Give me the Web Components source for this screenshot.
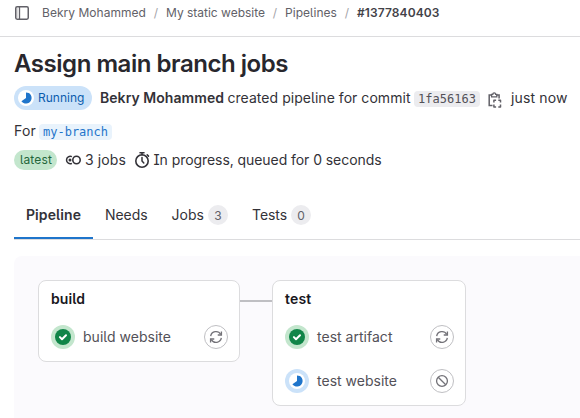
<!DOCTYPE html>
<html lang="en">
<head>
<meta charset="utf-8">
<title>Pipeline #1377840403</title>
<style>
html,body{margin:0;padding:0;background:#fff;overflow:hidden}
body{width:580px;height:418px;font-family:Inter,"Noto Sans",sans-serif;font-feature-settings:"cv05" 1,"cv08" 1;color:#333238}
</style>
</head>
<body>
<pipeline-page></pipeline-page>
<script>
const define = (name, html, extra) => customElements.define(name, class extends HTMLElement {
  connectedCallback() {
    if (!this.shadowRoot) {
      this.attachShadow({mode: 'open'}).innerHTML = html(this);
    }
    if (extra) extra(this);
  }
});

// Text run whose tracking is tuned to a given advance width.
define('ui-text', () => `<style>:host{display:block;white-space:pre;flex:none;line-height:20px}span{display:inline-block}</style><span><slot></slot></span>`, el => {
  const want = parseFloat(el.getAttribute('w'));
  if (!want) return;
  const span = el.shadowRoot.querySelector('span');
  const natural = span.getBoundingClientRect().width;
  span.style.letterSpacing = ((want - natural) / el.textContent.length) + 'px';
  el.style.width = want + 'px';
});

const icons = {
  sidebar: `<rect x="1.75" y="1.75" width="12.5" height="12.5" rx="1.4" fill="none" stroke="currentColor" stroke-width="1.5"/><path d="M5.5 2v12" stroke="currentColor" stroke-width="1.3"/><path d="M3.2 3v10" stroke="currentColor" stroke-opacity=".3" stroke-width="1"/>`,
  copy: `<path d="M5 3H2.2v10.5H5.5M9.5 3h2.6v3.4" fill="none" stroke="currentColor" stroke-width="1.5"/><path d="M4.6 4.8V2.3h1.2a1.4 1.4 0 0 1 2.8 0h1.2v2.5z" fill="none" stroke="currentColor" stroke-width="1.3"/><path d="M6.9 10.6V8.2h2.2M11.3 8.2h2.2v2.4M13.5 12.6V15h-2.2M9.1 15H6.9v-2.4" fill="none" stroke="currentColor" stroke-width="1.5" stroke-linejoin="round"/>`,
  jobs: `<path d="M6.9 4.7A3.7 3.7 0 1 0 6.9 11.3" fill="none" stroke="currentColor" stroke-width="1.5"/><circle cx="11.5" cy="8" r="3.7" fill="none" stroke="currentColor" stroke-width="1.6"/><circle cx="5" cy="8" r="1.5" fill="currentColor"/>`,
  timer: `<circle cx="8" cy="9" r="6.2" fill="none" stroke="currentColor" stroke-width="1.6"/><path d="M6 .8h4M8 .8v2.2M13.2 2.8l1.3 1.3M8 5.6V9l1.8 2" fill="none" stroke="currentColor" stroke-width="1.5" stroke-linecap="round"/>`,
  retry: `<path d="M1.9 7A6.2 6.2 0 0 1 13.4 5M14.1 9A6.2 6.2 0 0 1 2.6 11" fill="none" stroke="currentColor" stroke-width="1.5"/><path d="M14.2 1.6v4.1h-4.2M1.8 14.4v-4.1H6" fill="none" stroke="currentColor" stroke-width="1.5"/>`,
  cancel: `<circle cx="8" cy="8" r="6.2" fill="none" stroke="currentColor" stroke-width="1.5"/><path d="M3.7 3.7l8.6 8.6" stroke="currentColor" stroke-width="1.5"/>`,
  running: `<circle cx="8" cy="8" r="8" fill="#fff"/><path d="M8 2.4A5.6 5.6 0 1 1 3.4 11.2L8 8z" fill="#1f75cb"/>`,
  success: `<circle cx="8" cy="8" r="8" fill="#108548"/><path d="M4.9 8.1l2.1 2.1 4-4" fill="none" stroke="#fff" stroke-width="2" stroke-linecap="round" stroke-linejoin="round"/>`
};
define('ui-icon', el => `<style>:host{display:block;flex:none;width:${el.getAttribute('size') || 16}px;height:${el.getAttribute('size') || 16}px}svg{display:block;width:100%;height:100%}</style><svg viewBox="0 0 16 16">${icons[el.getAttribute('name')]}</svg>`);

define('status-dot', el => `<style>:host{display:flex;flex:none;align-items:center;justify-content:center;width:24px;height:24px;border-radius:50%;background:${el.getAttribute('kind') === 'success' ? '#c3e6cd' : '#cbe2f9'}}</style><ui-icon name="${el.getAttribute('kind')}"></ui-icon>`);

define('round-button', el => `<style>:host{display:flex;flex:none;box-sizing:border-box;align-items:center;justify-content:center;width:24px;height:24px;border:1px solid #bfbfc3;border-radius:50%;color:#737278;background:#fff}</style><ui-icon name="${el.getAttribute('icon')}" size="14"></ui-icon>`);

define('job-row', el => `<style>:host{display:flex;height:24px;align-items:center;margin-bottom:20px;color:#535158;font-size:14px}:host(:last-child){margin-bottom:0}ui-text{margin-left:8px}round-button{margin-left:auto}</style>
<status-dot kind="${el.getAttribute('kind')}"></status-dot><ui-text w="${el.getAttribute('w')}">${el.getAttribute('label')}</ui-text><round-button icon="${el.getAttribute('icon')}"></round-button>`);

define('stage-card', el => `<style>:host{display:block;flex:none;box-sizing:border-box;padding:8px 11px 12px 12px;border:1px solid #dcdcde;border-radius:8px;background:#fff}.t{height:20px;margin-bottom:16px;color:#18171d;font-size:14px;font-weight:600}</style><div class="t"><ui-text w="${el.getAttribute('w')}">${el.getAttribute('label')}</ui-text></div><slot></slot>`);

define('code-chip', () => `<style>:host{display:flex;flex:none;box-sizing:border-box;height:16px;padding:0 4px;align-items:center;border-radius:4px;background:#ececef;color:#535158;font:12px "DejaVu Sans Mono",monospace;font-feature-settings:normal}:host([link]){background:#e9f3fc;color:#1f75cb}</style><slot></slot>`);

define('nav-tab', el => `<style>:host{display:flex;flex:none;box-sizing:border-box;height:48px;padding:0 12px;align-items:center;font-size:14px}:host([active]){font-weight:600;box-shadow:inset 0 -2px #1f75cb}.c{display:flex;width:20px;height:20px;margin-left:4px;align-items:center;justify-content:center;border-radius:10px;background:#ececef;color:#626168;font-size:12px}</style><ui-text w="${el.getAttribute('w')}">${el.getAttribute('label')}</ui-text>${el.hasAttribute('count') ? `<div class="c">${el.getAttribute('count')}</div>` : ''}`);

define('top-crumbs', () => `<style>:host{display:flex;box-sizing:border-box;height:37px;padding:0 0 11px 14px;align-items:center;border-bottom:1px solid #dcdcde;font-size:12px;color:#626168}i{font-style:normal;width:20px;text-align:center;color:#a4a3a8}ui-icon{margin-right:12px}b{font-weight:600;color:#434248}</style>
<ui-icon name="sidebar"></ui-icon><ui-text w="104">Bekry Mohammed</ui-text><i>/</i><ui-text w="99">My static website</ui-text><i>/</i><ui-text w="52">Pipelines</ui-text><i>/</i><b><ui-text w="82.5">#1377840403</ui-text></b>`);

define('pipeline-header', () => `<style>:host{display:block;padding:11px 0 0 14px;font-size:14px}h1{margin:0;height:32px;font-size:24px;font-weight:600;color:#28272d}h1 ui-text{line-height:32px}
.row{display:flex;align-items:center}.a{height:24px;margin-top:6px}.b{height:20px;margin-top:11px}.c{height:20px;margin-top:9px}
.b code-chip{margin:1px 0 0 3px}
.run{display:flex;box-sizing:border-box;width:78px;height:24px;padding-left:4px;align-items:center;gap:4px;border-radius:12px;background:#cbe2f9;color:#0b5cad;font-size:12px;margin-right:8px}
.late{box-sizing:border-box;width:43px;height:20px;padding-left:6px;margin-right:8px;border-radius:10px;background:#c3e6cd;color:#24663b;font-size:12px}
b{font-weight:600}.copy{color:#626168;margin:3px 6px 0 7px}.a code-chip{margin:1px 0 0 3.5px}</style>
<h1><ui-text w="274">Assign main branch jobs</ui-text></h1>
<div class="row a"><div class="run"><ui-icon name="running"></ui-icon><ui-text w="46.5">Running</ui-text></div><b><ui-text w="124">Bekry Mohammed</ui-text></b><ui-text w="183" style="margin-left:3.5px">created pipeline for commit</ui-text><code-chip><ui-text w="58">1fa56163</ui-text></code-chip><ui-icon class="copy" name="copy"></ui-icon><ui-text w="56.5" style="margin-left:2px">just now</ui-text></div>
<div class="row b"><ui-text w="22">For</ui-text><code-chip link><ui-text w="65">my-branch</ui-text></code-chip></div>
<div class="row c"><div class="late"><ui-text w="32">latest</ui-text></div><ui-icon name="jobs"></ui-icon><ui-text w="41" style="margin-left:4px">3 jobs</ui-text><ui-icon name="timer" style="margin-left:8px"></ui-icon><ui-text w="228" style="margin-left:3.5px">In progress, queued for 0 seconds</ui-text></div>`);

define('pipeline-graph', () => `<style>:host{display:flex;box-sizing:border-box;height:162px;margin:16px 0 0 14px;padding:24px 0 0 24px;align-items:flex-start;border-radius:8px 0 0 0;background:#fbfafd}.link{width:32px;height:2px;margin-top:20px;background:#bfbfc3}</style>
<stage-card label="build" w="34" style="width:202px"><job-row kind="success" label="build website" w="88" icon="retry"></job-row></stage-card><div class="link"></div>
<stage-card label="test" w="26.5" style="width:194px"><job-row kind="success" label="test artifact" w="75.5" icon="retry"></job-row><job-row kind="running" label="test website" w="80" icon="cancel"></job-row></stage-card>`);

define('pipeline-page', () => `<style>:host{display:block;width:580px;height:418px;overflow:hidden;background:#fff}.tabs{display:flex;height:48px;margin:21px 0 0 14px;border-bottom:1px solid #dcdcde}</style>
<top-crumbs></top-crumbs><pipeline-header></pipeline-header>
<div class="tabs"><nav-tab active label="Pipeline" w="55"></nav-tab><nav-tab label="Needs" w="42.5"></nav-tab><nav-tab label="Jobs" w="32.5" count="3"></nav-tab><nav-tab label="Tests" w="35" count="0"></nav-tab></div>
<pipeline-graph></pipeline-graph>`);
</script>
</body>
</html>
